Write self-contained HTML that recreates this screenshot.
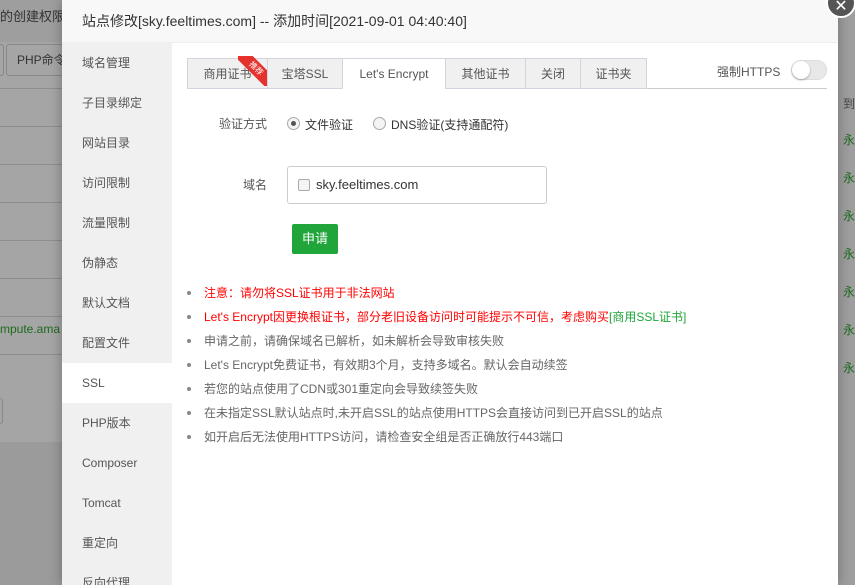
<!DOCTYPE html>
<html><head><meta charset="utf-8"><style>
*{margin:0;padding:0;box-sizing:border-box}
html,body{width:855px;height:585px;overflow:hidden}
body{background:#a5a5a5;font-family:"Liberation Sans","Noto Sans CJK SC",sans-serif;position:relative;font-size:12px;color:#555}
.bg{position:absolute;left:0;top:0;width:855px;height:585px}
.modal{position:absolute;left:62px;top:0;width:776px;height:585px;background:#fff;box-shadow:0 0 12px rgba(0,0,0,.3);overflow:hidden}
.hd{height:43px;background:#f8f8f8;border-bottom:1px solid #eee;font-size:14px;color:#333;line-height:43px;padding-left:20px}
.side{position:absolute;left:0;top:43px;width:110px;height:560px;background:#f0f0f0}
.side div{height:40px;line-height:40px;padding-left:20px;font-size:12px;color:#555}
.side .on{background:#fff}
.abs{position:absolute;white-space:nowrap}
.tab{position:absolute;top:58px;height:31px;line-height:31px;text-align:center;background:#f0f0f0;border:1px solid #d6d3e0;font-size:12px;color:#555}
.li{position:absolute;left:204px;font-size:12px;color:#666;white-space:nowrap}
.dot{position:absolute;left:187px;width:4px;height:4px;border-radius:2px;background:#888}
</style></head><body>
<div class="bg">
 <div class="abs" style="left:0;top:0;width:62px;height:42px;background:#9e9e9e"></div>
 <div class="abs" style="left:0;top:6px;font-size:13px;color:#333">的创建权限配</div>
 <div class="abs" style="left:-2px;top:44px;width:6px;height:32px;border:1px solid #888;border-radius:3px"></div>
 <div class="abs" style="left:6px;top:44px;width:70px;height:32px;border:1px solid #888;border-radius:3px;line-height:30px;padding-left:10px;color:#333;overflow:hidden">PHP命令</div>
 <div class="abs" style="left:0;top:88px;width:62px;border-top:1px solid #8e8e8e"></div>
 <div class="abs" style="left:0;top:126px;width:62px;border-top:1px solid #8e8e8e"></div>
 <div class="abs" style="left:0;top:164px;width:62px;border-top:1px solid #8e8e8e"></div>
 <div class="abs" style="left:0;top:202px;width:62px;border-top:1px solid #8e8e8e"></div>
 <div class="abs" style="left:0;top:240px;width:62px;border-top:1px solid #8e8e8e"></div>
 <div class="abs" style="left:0;top:278px;width:62px;border-top:1px solid #8e8e8e"></div>
 <div class="abs" style="left:0;top:316px;width:62px;border-top:1px solid #8e8e8e"></div>
 <div class="abs" style="left:0;top:322px;color:#1d6a1d;font-size:12px">mpute.ama</div>
 <div class="abs" style="left:0;top:354px;width:62px;border-top:1px solid #8e8e8e"></div>
 <div class="abs" style="left:0;top:398px;width:3px;height:26px;border:1px solid #888;border-left:none;border-radius:0 3px 3px 0"></div>
 <div class="abs" style="left:0;top:442px;width:62px;height:143px;background:#9b9b9b"></div>
 <div class="abs" style="left:838px;top:0;width:17px;height:585px;background:#9e9e9e"></div>
 <div class="abs" style="left:843px;top:95px;color:#444">到</div>
 <div class="abs" style="left:843px;top:131px;color:#1d6a1d">永</div>
 <div class="abs" style="left:843px;top:169px;color:#1d6a1d">永</div>
 <div class="abs" style="left:843px;top:207px;color:#1d6a1d">永</div>
 <div class="abs" style="left:843px;top:245px;color:#1d6a1d">永</div>
 <div class="abs" style="left:843px;top:283px;color:#1d6a1d">永</div>
 <div class="abs" style="left:843px;top:321px;color:#1d6a1d">永</div>
 <div class="abs" style="left:843px;top:359px;color:#1d6a1d">永</div>
</div>
<div class="modal">
 <div class="hd">站点修改[sky.feeltimes.com] -- 添加时间[2021-09-01 04:40:40]</div>
 <div class="side">
  <div>域名管理</div><div>子目录绑定</div><div>网站目录</div><div>访问限制</div><div>流量限制</div><div>伪静态</div><div>默认文档</div><div>配置文件</div><div class="on">SSL</div><div>PHP版本</div><div>Composer</div><div>Tomcat</div><div>重定向</div><div>反向代理</div>
 </div>
</div>
<div class="abs" style="left:826px;top:-12px;width:30px;height:30px;border-radius:15px;background:#555;border:2px solid #fff;color:#fff;font-size:16px;text-align:center;line-height:34px">✕</div>
<div class="tab" style="left:187px;width:81px">商用证书</div>
<div class="abs" style="left:238px;top:56px;width:30px;height:30px;overflow:hidden"><div style="position:absolute;left:-4px;top:6px;width:44px;height:13px;background:#e5322d;transform:rotate(45deg);color:#fff;font-size:8px;line-height:13px;text-align:center">推荐</div></div>
<div class="tab" style="left:267px;width:76px">宝塔SSL</div>
<div class="tab" style="left:342px;width:104px;background:#fff;border-bottom-color:#fff">Let's Encrypt</div>
<div class="tab" style="left:445px;width:81px">其他证书</div>
<div class="tab" style="left:525px;width:56px">关闭</div>
<div class="tab" style="left:580px;width:67px">证书夹</div>
<div class="abs" style="left:647px;top:88px;width:180px;border-top:1px solid #ccc"></div>
<div class="abs" style="left:717px;top:63px;color:#555">强制HTTPS</div>
<div class="abs" style="left:791px;top:60px;width:36px;height:20px;border-radius:10px;background:#e8e8e8;border:1px solid #ddd"><div style="width:18px;height:18px;border-radius:9px;background:#fff;box-shadow:0 1px 2px rgba(0,0,0,.3)"></div></div>
<div class="abs" style="left:219px;top:115px;font-size:12px;color:#555">验证方式</div>
<div class="abs" style="left:287px;top:117px;width:13px;height:13px;border-radius:7px;border:1px solid #aaa;background:#f4f4f4"><div style="margin:3px;width:5px;height:5px;border-radius:3px;background:#555"></div></div>
<div class="abs" style="left:305px;top:116px;color:#333">文件验证</div>
<div class="abs" style="left:373px;top:117px;width:13px;height:13px;border-radius:7px;border:1px solid #aaa;background:#f4f4f4"></div>
<div class="abs" style="left:391px;top:116px;color:#333">DNS验证(支持通配符)</div>
<div class="abs" style="left:243px;top:176px;color:#555">域名</div>
<div class="abs" style="left:287px;top:166px;width:260px;height:38px;border:1px solid #ccc;border-radius:3px"></div>
<div class="abs" style="left:298px;top:179px;width:12px;height:12px;border:1px solid #aaa;border-radius:2px;background:#f4f4f4"></div>
<div class="abs" style="left:316px;top:177px;color:#333;font-size:13px">sky.feeltimes.com</div>
<div class="abs" style="left:292px;top:224px;width:46px;height:30px;background:#20a53a;border-radius:2px;color:#fff;text-align:center;line-height:30px;font-size:13px">申请</div>
<div class="dot" style="top:291px"></div><div class="li" style="top:284px;color:#f00">注意：请勿将SSL证书用于非法网站</div>
<div class="dot" style="top:315px"></div><div class="li" style="top:308px;color:#f00">Let's Encrypt因更换根证书，部分老旧设备访问时可能提示不可信，考虑购买<span style="color:#20a53a">[商用SSL证书]</span></div>
<div class="dot" style="top:339px"></div><div class="li" style="top:332px">申请之前，请确保域名已解析，如未解析会导致审核失败</div>
<div class="dot" style="top:363px"></div><div class="li" style="top:356px">Let's Encrypt免费证书，有效期3个月，支持多域名。默认会自动续签</div>
<div class="dot" style="top:387px"></div><div class="li" style="top:380px">若您的站点使用了CDN或301重定向会导致续签失败</div>
<div class="dot" style="top:411px"></div><div class="li" style="top:404px">在未指定SSL默认站点时,未开启SSL的站点使用HTTPS会直接访问到已开启SSL的站点</div>
<div class="dot" style="top:435px"></div><div class="li" style="top:428px">如开启后无法使用HTTPS访问，请检查安全组是否正确放行443端口</div>
</body></html>
